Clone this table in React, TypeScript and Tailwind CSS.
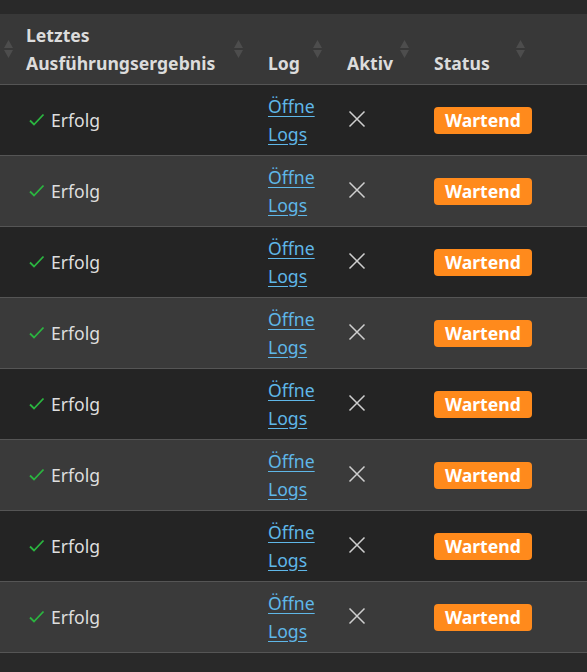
import React from "react";

const cols = "grid grid-cols-[10px_242px_79px_87px_116px_1fr]";

function SortIcon() {
  return (
    <svg width="9" height="18" viewBox="0 0 9 18" className="shrink-0">
      <path d="M4.5 0 L9 8 L0 8 Z" fill="#4d4d4d" />
      <path d="M0 10 L9 10 L4.5 18 Z" fill="#4d4d4d" />
    </svg>
  );
}

function HeaderCell({ label, first }: { label: React.ReactNode; first?: boolean }) {
  return (
    <div className="flex items-center justify-between pl-4 pr-[9px]">
      <div className={first ? "py-[7px]" : "self-end pb-[7px]"}>{label}</div>
      <SortIcon />
    </div>
  );
}

function Check() {
  return (
    <svg width="16" height="14" viewBox="0 0 16 14" className="shrink-0">
      <path d="M1 7.5 L5 11.5 L14.5 1.5" fill="none" stroke="#2bb540" strokeWidth="1.8" />
    </svg>
  );
}

function Cross() {
  return (
    <svg width="18" height="18" viewBox="0 0 18 18">
      <path d="M1.5 1.5 L16.5 16.5 M16.5 1.5 L1.5 16.5" fill="none" stroke="#cfcfcf" strokeWidth="1.5" />
    </svg>
  );
}

function Row({ odd }: { odd: boolean }) {
  return (
    <div className={`${cols} h-[71px] items-center border-b border-[#555555] ${odd ? "bg-[#3a3a3a]" : "bg-[#242424]"}`}>
      <div />
      <div className="flex items-center gap-[6px] pl-[19px]">
        <Check />
        <span className="text-[#dedede]">Erfolg</span>
      </div>
      <div className="pl-4 leading-[28px]">
        <a href="#" className="text-[#5fb7e8] underline underline-offset-[3px]">
          Öffne
          <br />
          Logs
        </a>
      </div>
      <div className="pl-[17px] pb-[2px]">
        <Cross />
      </div>
      <div className="pl-4">
        <span className="inline-block rounded-[4px] bg-[#ff8a1c] px-[11px] font-bold leading-[27px] text-white">
          Wartend
        </span>
      </div>
      <div />
    </div>
  );
}

export default function App() {
  return (
    <div className="h-[672px] w-[587px] overflow-hidden bg-[#292929] pt-[14px] text-[17.6px] leading-[28px] font-['Noto_Sans',sans-serif]">
      <div className={`${cols} border-b border-[#555555] bg-[#383838] font-bold text-[#dcdcdc]`}>
        <div className="flex items-center justify-end -mr-[3px] overflow-hidden">
          <SortIcon />
        </div>
        <HeaderCell
          first
          label={
            <>
              Letztes
              <br />
              Ausführungsergebnis
            </>
          }
        />
        <HeaderCell label="Log" />
        <HeaderCell label="Aktiv" />
        <HeaderCell label="Status" />
        <div />
      </div>
      {Array.from({ length: 8 }).map((_, i) => (
        <Row key={i} odd={i % 2 === 1} />
      ))}
    </div>
  );
}
